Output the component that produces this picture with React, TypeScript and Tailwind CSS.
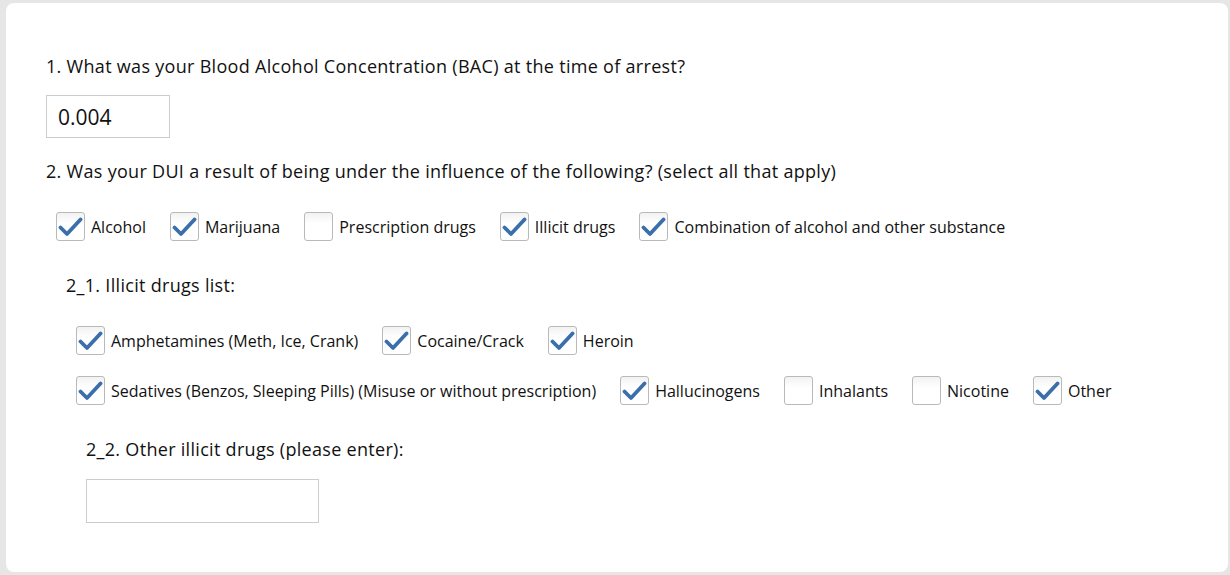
import React from "react";

const Check = ({ checked }: { checked: boolean }) => (
  <span className="w-[29px] h-[29px] shrink-0 rounded-[3px] border border-[#b9b9b9] bg-gradient-to-b from-[#f2f2f2] to-white to-40% flex items-center justify-center">
    {checked && (
      <svg width="25" height="22" viewBox="0 0 25 22">
        <path
          d="M2.5 11.5 L9 18 L22.5 3.5"
          fill="none"
          stroke="#3b6fab"
          strokeWidth="3.8"
          strokeLinecap="round"
          strokeLinejoin="round"
        />
      </svg>
    )}
  </span>
);

const Option = ({ label, checked }: { label: string; checked: boolean }) => (
  <label className="flex items-center gap-[6px] mr-[24px]">
    <Check checked={checked} />
    <span className="text-[16px] text-[#111]">{label}</span>
  </label>
);

const App = () => {
  const substances = [
    { label: "Alcohol", checked: true },
    { label: "Marijuana", checked: true },
    { label: "Prescription drugs", checked: false },
    { label: "Illicit drugs", checked: true },
    { label: "Combination of alcohol and other substance", checked: true },
  ];
  const drugsRow1 = [
    { label: "Amphetamines (Meth, Ice, Crank)", checked: true },
    { label: "Cocaine/Crack", checked: true },
    { label: "Heroin", checked: true },
  ];
  const drugsRow2 = [
    { label: "Sedatives (Benzos, Sleeping Pills) (Misuse or without prescription)", checked: true },
    { label: "Hallucinogens", checked: true },
    { label: "Inhalants", checked: false },
    { label: "Nicotine", checked: false },
    { label: "Other", checked: true },
  ];

  return (
    <div className="w-[1230px] h-[575px] bg-[#e6e6e6] pt-[3px] pl-[6px] pr-[2px] pb-[3px] font-['Open_Sans',sans-serif]">
      <div className="h-full bg-white rounded-[8px] pl-[40px] pt-[48px]">
        <h2 className="text-[18px] tracking-[0.3px] text-[#111] leading-[30px]">
          1. What was your Blood Alcohol Concentration (BAC) at the time of arrest?
        </h2>
        <div className="mt-[14px] w-[124px] h-[43px] border border-[#cccccc] px-[11px] pt-[2px] flex items-center text-[21px] text-[#111]">
          0.004
        </div>
        <h2 className="mt-[18px] text-[18px] tracking-[0.3px] text-[#111] leading-[30px]">
          2. Was your DUI a result of being under the influence of the following? (select all that apply)
        </h2>
        <div className="mt-[26px] pl-[10px] flex items-center">
          {substances.map((s) => (
            <Option key={s.label} {...s} />
          ))}
        </div>

        <div className="pl-[20px] mt-[29px]">
          <h3 className="text-[18px] tracking-[0.3px] text-[#111] leading-[30px]">2_1. Illicit drugs list:</h3>
          <div className="mt-[26px] pl-[10px] flex items-center">
            {drugsRow1.map((s) => (
              <Option key={s.label} {...s} />
            ))}
          </div>
          <div className="mt-[21px] pl-[10px] flex items-center">
            {drugsRow2.map((s) => (
              <Option key={s.label} {...s} />
            ))}
          </div>

          <div className="pl-[20px] mt-[29px]">
            <h3 className="text-[18px] tracking-[0.3px] text-[#111] leading-[30px]">
              2_2. Other illicit drugs (please enter):
            </h3>
            <div className="mt-[15px] w-[233px] h-[44px] border border-[#cccccc]" />
          </div>
        </div>
      </div>
    </div>
  );
};

export default App;
